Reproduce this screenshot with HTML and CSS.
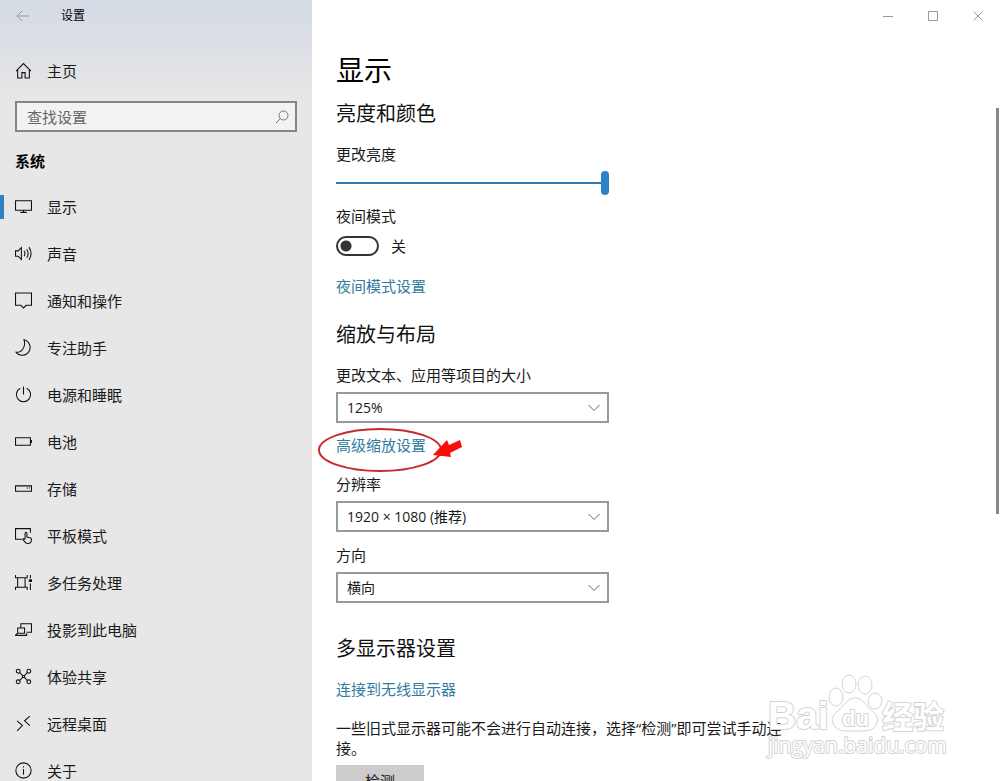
FILE: index.html
```html
<!DOCTYPE html>
<html lang="zh-CN">
<head>
    <meta charset="UTF-8">
    <meta name="viewport" content="width=device-width, initial-scale=1">
    <title>设置</title>
    <link rel="stylesheet" href="styles.css">
</head>
<body>
<div class="window">
    <aside class="sidebar">
        <header class="titlebar">
            <button class="back" type="button" aria-label="返回">
                <svg width="14" height="12" viewBox="0 0 14 12"><path d="M13 6H1M6 1L1 6l5 5"/></svg>
            </button>
            <span class="title">设置</span>
        </header>
        <a class="item home" href="#">
            <svg class="icon" viewBox="0 0 16 16"><path d="M1 8.500L8 1.500l7 7M2.500 7.500v7.500h4v-5h3v5h4V7.500"/></svg>
            <span>主页</span>
        </a>
        <form class="search">
            <input type="text" placeholder="查找设置" aria-label="查找设置">
            <button type="button" aria-label="搜索">
                <svg width="14" height="14" viewBox="0 0 14 14"><circle cx="8.500" cy="5.500" r="4.500"/><path d="M5.500 8.500L1 13"/></svg>
            </button>
        </form>
        <h2 class="group">系统</h2>
        <nav class="nav">
            <a class="item on" href="#">
                <svg class="icon" viewBox="0 0 16 16"><path d="M.5 2.500h15v9H.5zM8 11.500v2M5 13.500h6"/></svg>
                <span>显示</span>
            </a>
            <a class="item" href="#">
                <svg class="icon" viewBox="0 0 16 16"><path d="M.5 5.500h2.500l3-3v11l-3-3H.5zM8.500 5.500q1.800 2.500 0 5M11 4q2.800 4 0 8M13.200 2q3.800 6 0 12"/></svg>
                <span>声音</span>
            </a>
            <a class="item" href="#">
                <svg class="icon" viewBox="0 0 16 16"><path d="M.5 1h15v11.500h-5L8 15l-2.500-2.500h-5z"/></svg>
                <span>通知和操作</span>
            </a>
            <a class="item" href="#">
                <svg class="icon" viewBox="0 0 16 16"><path d="M8.500.7a7.400 7.400 0 1 1-7.500 11.800c5.500.5 9.500-5.500 7.500-11.800z"/></svg>
                <span>专注助手</span>
            </a>
            <a class="item" href="#">
                <svg class="icon" viewBox="0 0 16 16"><path d="M8 .5v7.500M5 2.200a6.700 6.700 0 1 0 6 0"/></svg>
                <span>电源和睡眠</span>
            </a>
            <a class="item" href="#">
                <svg class="icon" viewBox="0 0 16 16"><path d="M.5 4.500h14v7H.5zM15.500 6.500v3"/></svg>
                <span>电池</span>
            </a>
            <a class="item" href="#">
                <svg class="icon" viewBox="0 0 16 16"><path d="M.5 5.500h15v5H.5zM11 7.500h1M13 7.500h1"/></svg>
                <span>存储</span>
            </a>
            <a class="item" href="#">
                <svg class="icon" viewBox="0 0 16 16"><path d="M6.500 11.500h-6v-10h14v4M9.500 11.500V6q0-1 .8-1t.9 1v3.500l3 .7q1.300.3 1.300 1.500 0 3.800-3.500 3.800-2 0-3-1.800L7.300 11.500q.8-1.200 2.200.3"/></svg>
                <span>平板模式</span>
            </a>
            <a class="item" href="#">
                <svg class="icon" viewBox="0 0 16 16"><path d="M.5 1v2.500h11V1M2.500 3.500v9M9.500 3.500v9M.5 15v-2.500h11V15M14.500 1v3M14.500 9v6"/><path class="solid" d="M13 5h3v2.500h-3z"/></svg>
                <span>多任务处理</span>
            </a>
            <a class="item" href="#">
                <svg class="icon" viewBox="0 0 16 16"><path d="M5.500 6.500v-4h10v8H11M2.500 6.500h6.500v5H2.500zM2.500 11.500l-2 2H11v-2"/></svg>
                <span>投影到此电脑</span>
            </a>
            <a class="item" href="#">
                <svg class="icon" viewBox="0 0 16 16"><circle cx="3" cy="3" r="1.800"/><circle cx="13" cy="3" r="1.800"/><circle cx="3" cy="13" r="1.800"/><circle cx="13" cy="13" r="1.800"/><path d="M4.200 4.200L7 7M11.800 4.200L9 7M4.200 11.800L7 9M11.800 11.800L9 9M7 7h2v2H7z"/></svg>
                <span>体验共享</span>
            </a>
            <a class="item" href="#">
                <svg class="icon" viewBox="0 0 16 16"><path d="M2 5.500L7 10l-5 5M14 1L9 5.500l5 4.500"/></svg>
                <span>远程桌面</span>
            </a>
            <a class="item" href="#">
                <svg class="icon" viewBox="0 0 16 16"><circle cx="8" cy="8" r="7.200"/><path d="M8 6.500V12M8 4v1.200"/></svg>
                <span>关于</span>
            </a>
        </nav>
    </aside>

    <main class="main">
        <div class="controls">
            <button type="button" aria-label="最小化"><svg width="10" height="10" viewBox="0 0 10 10"><path d="M0 5.500h10"/></svg></button>
            <button type="button" aria-label="最大化"><svg width="10" height="10" viewBox="0 0 10 10"><path d="M.5.5h9v9h-9z"/></svg></button>
            <button type="button" aria-label="关闭"><svg width="10" height="10" viewBox="0 0 10 10"><path d="M.5.5l9 9M9.500.5l-9 9"/></svg></button>
        </div>

        <div class="content">
            <h1>显示</h1>

            <section>
                <h2>亮度和颜色</h2>
                <div class="field">
                    <label for="brightness">更改亮度</label>
                    <input class="slider" id="brightness" type="range" min="0" max="100" value="100">
                </div>
                <div class="field night">
                    <label for="night">夜间模式</label>
                    <div class="switch">
                        <input id="night" type="checkbox" role="switch">
                        <span>关</span>
                    </div>
                </div>
                <a class="link" href="#">夜间模式设置</a>
            </section>

            <section>
                <h2>缩放与布局</h2>
                <div class="field">
                    <label for="scale">更改文本、应用等项目的大小</label>
                    <div class="select">
                        <select id="scale"><option>125%</option></select>
                        <svg width="12" height="8" viewBox="0 0 12 8"><path d="M.5 1L6 6.500 11.500 1"/></svg>
                    </div>
                </div>
                <div class="marked">
                    <a href="#">高级缩放设置</a>
                    <svg class="mark" width="150" height="48" viewBox="0 0 150 48">
                        <ellipse cx="64" cy="24" rx="61" ry="21"/>
                        <path d="M117 29l14-15 2 5 11-5 2 7-12 6 1 4z"/>
                    </svg>
                </div>
                <div class="field resolution">
                    <label for="resolution">分辨率</label>
                    <div class="select">
                        <select id="resolution"><option>1920 × 1080 (推荐)</option></select>
                        <svg width="12" height="8" viewBox="0 0 12 8"><path d="M.5 1L6 6.500 11.500 1"/></svg>
                    </div>
                </div>
                <div class="field direction">
                    <label for="direction">方向</label>
                    <div class="select">
                        <select id="direction"><option>横向</option></select>
                        <svg width="12" height="8" viewBox="0 0 12 8"><path d="M.5 1L6 6.500 11.500 1"/></svg>
                    </div>
                </div>
            </section>

            <section class="multi">
                <h2>多显示器设置</h2>
                <a class="wireless" href="#">连接到无线显示器</a>
                <p>一些旧式显示器可能不会进行自动连接，选择“检测”即可尝试手动连接。</p>
                <button class="detect" type="button">检测</button>
            </section>
        </div>
        <div class="scrollbar"></div>
    </main>

    <svg class="watermark" width="190" height="90" viewBox="0 0 190 90">
        <text class="brand" x="8" y="57">Bai</text>
        <ellipse cx="76" cy="25" rx="7" ry="9"/>
        <ellipse cx="89" cy="12" rx="7" ry="9"/>
        <ellipse cx="105" cy="13" rx="7" ry="9"/>
        <ellipse cx="115" cy="29" rx="7" ry="8"/>
        <path d="M95 26c-8 0-10 7-16 12-6 5-8 8-6 13 3 9 12 8 22 8s19 1 22-8c2-5 0-8-6-13-6-5-8-12-16-12z"/>
        <text class="du" x="82" y="54">du</text>
        <text class="jingyan" x="122" y="56">经验</text>
        <text class="site" x="8" y="81">jingyan.baidu.com</text>
    </svg>
</div>
</body>
</html>
```

FILE: styles.css
```css
* {
    box-sizing: border-box;
}

body {
    margin: 0;
    font: 15px/20px "Open Sans", "Noto Sans CJK SC", sans-serif;
    color: #1a1a1a;
    background-color: #fff;
}

a {
    color: #2f7c9f;
    text-decoration: none;
}

button {
    padding: 0;
    border: 0;
    background: none;
    font: inherit;
    color: inherit;
}

svg {
    display: block;
    fill: none;
    stroke: #111;
}

h1, h2, p {
    margin: 0;
    font-weight: normal;
}

.window {
    display: flex;
    height: 100vh;
    position: relative;
    overflow: hidden;
}

/* 左侧导航 */
.sidebar {
    flex: 0 0 312px;
    background: linear-gradient(#d5dbe4, #d9dde4 32px, #e7e7e7 100px);
}

.titlebar {
    display: flex;
    align-items: center;
    gap: 31px;
    height: 32px;
    padding-left: 16px;
    font-size: 12px;
    color: #000;
}

.back svg {
    stroke: #999;
}

.item {
    display: flex;
    align-items: center;
    gap: 15px;
    height: 47px;
    padding-left: 15px;
    color: #1a1a1a;
}

.home {
    margin-top: 15px;
}

.icon {
    width: 17px;
    height: 17px;
}

.icon .solid {
    fill: #111;
    stroke: none;
}

.search {
    display: flex;
    align-items: center;
    height: 31px;
    margin: 7px 15px 0;
    padding: 0 6px 0 10px;
    border: 2px solid #858585;
    background-color: #f2f2f2;
}

.search input {
    flex: 1;
    min-width: 0;
    padding: 0;
    border: 0;
    outline: 0;
    font: inherit;
    background: none;
}

.search input::placeholder {
    color: #666;
}

.search svg {
    stroke: #777;
}

.group {
    margin: 19px 15px 12px;
    font-size: 15px;
    line-height: 20px;
    font-weight: bold;
    color: #000;
}

.nav .on {
    background: linear-gradient(#2d81c4, #2d81c4) left center / 4px 24px no-repeat;
}

/* 右侧内容 */
.main {
    flex: 1;
    min-width: 0;
    position: relative;
}

.controls {
    display: flex;
    justify-content: flex-end;
}

.controls button {
    display: grid;
    place-items: center;
    width: 45px;
    height: 32px;
}

.controls svg {
    stroke: #999;
}

.content {
    max-width: 500px;
    padding: 20px 24px 0;
}

h1 {
    margin-bottom: 12px;
    font-size: 28px;
    line-height: 36px;
    color: #000;
}

section {
    display: flex;
    flex-direction: column;
    align-items: flex-start;
    margin-bottom: 25px;
}

section h2 {
    margin-bottom: 16px;
    font-size: 20px;
    line-height: 28px;
    color: #111;
}

.field {
    display: flex;
    flex-direction: column;
    gap: 7px;
    width: 100%;
    max-width: 273px;
}

.slider {
    -webkit-appearance: none;
    appearance: none;
    width: 100%;
    height: 24px;
    margin: 0;
    background: linear-gradient(#2d7cab, #2d7cab) center / 100% 2px no-repeat;
}

.slider::-webkit-slider-thumb {
    -webkit-appearance: none;
    width: 8px;
    height: 24px;
    border-radius: 4px;
    background-color: #2d81c4;
}

.night {
    gap: 10px;
    margin: 11px 0 20px;
}

.switch {
    display: flex;
    gap: 12px;
}

.switch input {
    -webkit-appearance: none;
    appearance: none;
    width: 43px;
    height: 20px;
    margin: 0;
    border: 2px solid #333;
    border-radius: 10px;
    background: radial-gradient(circle at 8px 8px, #333 5px, transparent 6px);
}

.select {
    display: grid;
    align-items: center;
}

.select select,
.select svg {
    grid-area: 1 / 1;
}

.select select {
    -webkit-appearance: none;
    appearance: none;
    width: 100%;
    height: 31px;
    padding: 0 30px 0 9px;
    border: 2px solid #999;
    border-radius: 0;
    font: inherit;
    font-size: 14px;
    color: #1a1a1a;
    background-color: #fff;
}

.select svg {
    justify-self: end;
    margin-right: 9px;
    stroke: #666;
    pointer-events: none;
}

.marked {
    position: relative;
    margin: 12px 0 19px;
}

/* 红圈和箭头盖在链接上面 */
.mark {
    position: absolute;
    left: -20px;
    top: -9px;
    pointer-events: none;
}

.mark ellipse {
    stroke: #c8292c;
    stroke-width: 2;
}

.mark path {
    fill: #f80d08;
    stroke: none;
}

.direction {
    margin: 13px 0 7px;
}

.wireless {
    margin-bottom: 19px;
}

.multi p {
    margin-bottom: 7px;
}

.detect {
    width: 88px;
    height: 31px;
    background-color: #ccc;
}

.scrollbar {
    position: absolute;
    right: 1px;
    top: 108px;
    width: 3px;
    height: 52%;
    background-color: #888;
}

/* 右下角水印 */
.watermark {
    position: absolute;
    right: 50px;
    bottom: 19px;
    pointer-events: none;
    stroke: #d4d4d4;
    stroke-linejoin: round;
    font-family: "Liberation Sans", "Noto Sans CJK SC", sans-serif;
    font-weight: bold;
}

.watermark text {
    fill: #fff;
    stroke-width: 2;
    paint-order: stroke;
}

.brand {
    font-size: 39px;
}

.du {
    font-size: 22px;
}

.jingyan {
    font-size: 31px;
}

.watermark .site {
    font-family: "Open Sans", sans-serif;
    font-size: 21px;
    font-weight: normal;
}
```
